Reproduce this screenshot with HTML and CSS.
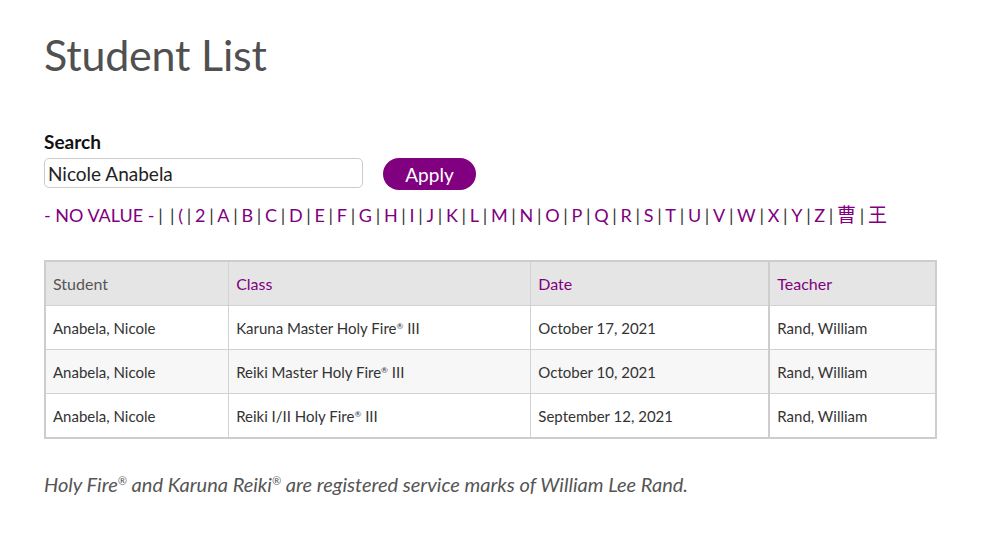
FILE: index.html
```html
<!DOCTYPE html>
<html>
<head>
<meta charset="utf-8">
<link rel="stylesheet" href="styles.css">
</head>
<body>
<div class="page">
  <h1 class="title">Student List</h1>
  <form class="search">
    <label class="search-label" for="q">Search</label>
    <div class="search-row">
      <input id="q" class="search-input" type="text" value="Nicole Anabela">
      <button type="button" class="apply">Apply</button>
    </div>
  </form>
  <div class="alpha">
    <a href="#">- NO VALUE -</a><span class="sep">|</span><a href="#"></a><span class="sep">|</span><a href="#">(</a><span class="sep">|</span><a href="#">2</a><span class="sep">|</span><a href="#">A</a><span class="sep">|</span><a href="#">B</a><span class="sep">|</span><a href="#">C</a><span class="sep">|</span><a href="#">D</a><span class="sep">|</span><a href="#">E</a><span class="sep">|</span><a href="#">F</a><span class="sep">|</span><a href="#">G</a><span class="sep">|</span><a href="#">H</a><span class="sep">|</span><a href="#">I</a><span class="sep">|</span><a href="#">J</a><span class="sep">|</span><a href="#">K</a><span class="sep">|</span><a href="#">L</a><span class="sep">|</span><a href="#">M</a><span class="sep">|</span><a href="#">N</a><span class="sep">|</span><a href="#">O</a><span class="sep">|</span><a href="#">P</a><span class="sep">|</span><a href="#">Q</a><span class="sep">|</span><a href="#">R</a><span class="sep">|</span><a href="#">S</a><span class="sep">|</span><a href="#">T</a><span class="sep">|</span><a href="#">U</a><span class="sep">|</span><a href="#">V</a><span class="sep">|</span><a href="#">W</a><span class="sep">|</span><a href="#">X</a><span class="sep">|</span><a href="#">Y</a><span class="sep">|</span><a href="#">Z</a><span class="sep">|</span><a href="#" class="cjk">曹</a><span class="sep">|</span><a href="#" class="cjk">王</a>
  </div>
  <table class="list">
    <colgroup>
      <col class="c1"><col class="c2"><col class="c3"><col class="c4">
    </colgroup>
    <thead>
      <tr>
        <th class="plain">Student</th>
        <th><a href="#">Class</a></th>
        <th><a href="#">Date</a></th>
        <th class="thick"><a href="#">Teacher</a></th>
      </tr>
    </thead>
    <tbody>
      <tr>
        <td>Anabela, Nicole</td>
        <td>Karuna Master Holy Fire<sup>®</sup> III</td>
        <td class="date">October 17, 2021</td>
        <td class="thick">Rand, William</td>
      </tr>
      <tr class="alt">
        <td>Anabela, Nicole</td>
        <td>Reiki Master Holy Fire<sup>®</sup> III</td>
        <td class="date">October 10, 2021</td>
        <td class="thick">Rand, William</td>
      </tr>
      <tr>
        <td>Anabela, Nicole</td>
        <td>Reiki I/II Holy Fire<sup>®</sup> III</td>
        <td class="date">September 12, 2021</td>
        <td class="thick">Rand, William</td>
      </tr>
    </tbody>
  </table>
  <p class="note">Holy Fire<sup>®</sup> and Karuna Reiki<sup>®</sup> are registered service marks of William Lee Rand.</p>
</div>
</body>
</html>
```
FILE: styles.css
```css
html, body {
  margin: 0;
  padding: 0;
  background: #fff;
}
body {
  font-family: "Lato", "Noto Sans CJK SC", sans-serif;
  color: #333;
}
.page {
  padding: 29px 44px 0 44px;
}
.title {
  margin: 0;
  font-weight: 400;
  font-size: 43px;
  line-height: 52px;
  color: #505050;
  letter-spacing: -0.2px;
}
.search {
  margin-top: 49px;
}
.search-label {
  display: block;
  font-weight: 700;
  font-size: 19px;
  line-height: 24px;
  color: #111;
}
.search-row {
  display: flex;
  align-items: center;
  gap: 20px;
  margin-top: 2px;
}
.search-input {
  box-sizing: border-box;
  width: 319px;
  height: 30px;
  border: 1px solid #ccc;
  border-radius: 5px;
  padding: 0 3px;
  font-family: inherit;
  font-size: 19px;
  color: #222;
  margin: 0;
}
.apply {
  box-sizing: border-box;
  width: 93px;
  height: 32px;
  border: none;
  border-radius: 16px;
  background: #800080;
  color: #fff;
  font-family: inherit;
  font-size: 19px;
  padding: 0;
  margin-top: 2px;
}
.alpha {
  margin-top: 13px;
  font-size: 18px;
  line-height: 24px;
  color: #800080;
  white-space: nowrap;
}
.alpha a {
  color: #800080;
  text-decoration: none;
}
.alpha .sep {
  color: #333;
  margin: 0 3.7px;
}
.alpha .cjk {
  font-size: 19px;
}
.list {
  margin-top: 33px;
  width: 893px;
  border-collapse: collapse;
  border: 2px solid #cdcdcd;
  font-size: 15px;
}
.c1 { width: 184px; }
.c2 { width: 303px; }
.c3 { width: 239px; }
.c4 { width: 167px; }
.list th, .list td {
  border: 1px solid #d2d2d2;
  text-align: left;
  padding: 0 7px;
  height: 43px;
}
.list th {
  background: #e5e5e5;
  font-weight: 400;
  font-size: 16px;
  color: #555;
}
.list th a {
  color: #800080;
  text-decoration: none;
}
.list .thick {
  border-left: 2px solid #cdcdcd;
}
.list td {
  color: #333;
  font-size: 15px;
}
.list tr.alt td {
  background: #f7f7f7;
}
.list sup, .note sup {
  font-size: 0.55em;
  vertical-align: 0.6em;
  line-height: 0;
}
.note {
  margin: 33px 0 0 0;
  font-style: italic;
  font-size: 20px;
  color: #555;
}
```
